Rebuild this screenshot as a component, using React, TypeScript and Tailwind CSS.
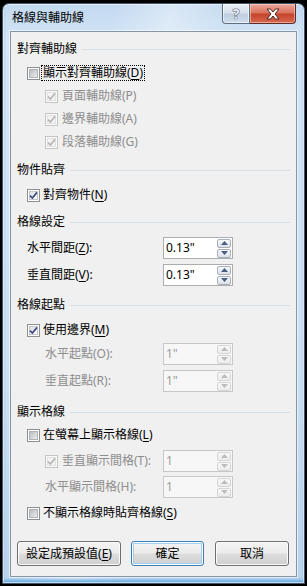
import React from 'react';

// Win7-style "格線與輔助線" dialog

const Check = ({ checked = false, disabled = false }: { checked?: boolean; disabled?: boolean }) => (
  <span
    className={`relative flex h-[13px] w-[13px] shrink-0 items-center justify-center border ${
      disabled ? 'border-[#c3c5c7] bg-[#fbfbfb]' : 'border-[#8e8f8f] bg-white'
    }`}
  >
    <span
      className={`h-[9px] w-[9px] border ${
        disabled
          ? 'border-[#e0e1e2] bg-[#f4f4f4]'
          : checked
          ? 'border-[#c4c6c9] bg-[linear-gradient(135deg,#dcdee1,#fbfbfb)]'
          : 'border-[#aeb2b6] bg-[linear-gradient(135deg,#b9bdc2,#ececec)]'
      }`}
    />
    {checked && (
      <svg className="absolute left-0 top-0" width="11" height="11" viewBox="0 0 11 11">
        <path
          d="M2 5.6 L4.4 8 L9 2.4"
          fill="none"
          stroke={disabled ? '#b6b6b6' : '#3f4d86'}
          strokeWidth="1.7"
        />
      </svg>
    )}
  </span>
);

const SpinBtn = ({ up = false, disabled = false }: { up?: boolean; disabled?: boolean }) => (
  <span
    className={`flex h-[9px] w-[14px] items-center justify-center rounded-[2px] border ${
      disabled
        ? 'border-[#d3d5d7] bg-[linear-gradient(180deg,#f8f8f8,#ececec)]'
        : 'border-[#a9afb8] bg-[linear-gradient(180deg,#f7f8fa,#dde1e7)]'
    }`}
  >
    <svg width="7" height="4" viewBox="0 0 7 4">
      <path d={up ? 'M0 4 L3.5 0 L7 4 Z' : 'M0 0 L3.5 4 L7 0 Z'} fill={disabled ? '#bcbcbc' : '#4b5c84'} />
    </svg>
  </span>
);

const Spinner = ({ value, disabled = false }: { value: string; disabled?: boolean }) => (
  <div
    className={`flex h-[22px] w-[70px] shrink-0 items-center border ${
      disabled ? 'border-[#c5c7ca] bg-[#f7f7f7] text-[#9b9b9b]' : 'border-[#abadb3] bg-white text-black'
    }`}
  >
    <span className="flex-1 pl-[2px] text-[12px] leading-none">{value}</span>
    <div className="mr-[1px] flex flex-col gap-[1px]">
      <SpinBtn up disabled={disabled} />
      <SpinBtn disabled={disabled} />
    </div>
  </div>
);

const Header = ({ text, className = '' }: { text: string; className?: string }) => (
  <div className={`flex h-[16px] items-center pl-[6px] pr-[6px] ${className}`}>
    <span>{text}</span>
    <div className="ml-[5px] h-px flex-1 bg-[#d5dfe5]" />
  </div>
);

const Btn = ({ children, main = false, className = '' }: { children: React.ReactNode; main?: boolean; className?: string }) => (
  <div
    className={`flex h-[25px] items-center justify-center rounded-[3px] border bg-[linear-gradient(180deg,#f4f4f4_0%,#ebebeb_48%,#dddddd_52%,#cfcfcf_100%)] ${
      main
        ? 'border-[#3c7fb1] shadow-[inset_0_0_0_1px_#ffffff,inset_0_0_0_2px_#9fd0f1]'
        : 'border-[#707070] shadow-[inset_0_0_0_1px_#fbfbfb]'
    } ${className}`}
  >
    {children}
  </div>
);

const grey = 'text-[#8d8d8d]';

export default function App() {
  return (
    <div className="h-[586px] w-[307px] bg-black pl-[2px] pt-[3px] font-['Noto_Sans','Noto_Sans_CJK_TC',sans-serif] text-[12px] leading-none text-black">
      <div className="flex h-[581px] w-[303px] flex-col rounded-t-[7px] border border-[#46566a] bg-[linear-gradient(100deg,transparent_28%,rgba(255,255,255,0.35)_42%,transparent_58%),linear-gradient(180deg,#c3d9f0_0%,#d2e4f6_6%,#cde0f3_60%,#b9d3ec_100%)] shadow-[inset_0_0_0_1px_rgba(255,255,255,0.55),inset_0_-3px_3px_#69ade2]">
        {/* title bar */}
        <div className="flex h-[27px] shrink-0 items-start">
          <span className="mt-[8px] pl-[9px]">格線與輔助線</span>
          <div className="ml-auto mr-[8px] flex">
            <div className="flex h-[20px] w-[28px] items-center justify-center rounded-bl-[4px] border border-t-0 border-[#5f6f82] bg-[linear-gradient(180deg,#eef3f9_0%,#d5e0ec_45%,#c0cfe0_55%,#cfdcea_100%)] shadow-[inset_0_0_0_1px_rgba(255,255,255,0.6)]">
              <span className="text-[14px] font-bold text-[#e4e8ee] [-webkit-text-stroke:1px_#555f6c] [paint-order:stroke_fill]">?</span>
            </div>
            <div className="flex h-[20px] w-[46px] items-center justify-center rounded-br-[4px] border border-l-0 border-t-0 border-[#5e2b24] bg-[linear-gradient(180deg,#eba99d_0%,#d9735f_45%,#c4452c_55%,#d7694f_100%)] shadow-[inset_0_0_0_1px_rgba(255,220,210,0.55)]">
              <svg width="14" height="12" viewBox="0 0 14 12">
                <path
                  d="M1 1 L4.5 1 L7 4 L9.5 1 L13 1 L9 6 L13 11 L9.5 11 L7 8 L4.5 11 L1 11 L5 6 Z"
                  fill="#ffffff"
                  stroke="#4a2a26"
                  strokeWidth="1"
                  strokeLinejoin="round"
                />
              </svg>
            </div>
          </div>
        </div>

        {/* client area */}
        <div className="mx-[7px] flex h-[546px] w-[287px] shrink-0 flex-col border border-[#8495a8] bg-[#f0f0f0] shadow-[0_0_0_1px_rgba(255,255,255,0.6)]">
          <Header text="對齊輔助線" className="mt-[9px]" />
          <div className="mt-[7px] flex h-[18px] items-center pl-[16px]">
            <Check />
            <span className="ml-[1px] border border-dotted border-black px-[1px] py-[1px]">
              顯示對齊輔助線(<span className="underline underline-offset-2">D</span>)
            </span>
          </div>
          <div className={`mt-[5px] flex h-[18px] items-center pl-[34px] ${grey}`}>
            <Check checked disabled />
            <span className="ml-[4px]">頁面輔助線(P)</span>
          </div>
          <div className={`mt-[5px] flex h-[18px] items-center pl-[34px] ${grey}`}>
            <Check checked disabled />
            <span className="ml-[4px]">邊界輔助線(A)</span>
          </div>
          <div className={`mt-[5px] flex h-[18px] items-center pl-[34px] ${grey}`}>
            <Check checked disabled />
            <span className="ml-[4px]">段落輔助線(G)</span>
          </div>

          <Header text="物件貼齊" className="mt-[11px]" />
          <div className="mt-[8px] flex h-[18px] items-center pl-[16px]">
            <Check checked />
            <span className="ml-[3px]">
              對齊物件(<span className="underline underline-offset-2">N</span>)
            </span>
          </div>

          <Header text="格線設定" className="mt-[10px]" />
          <div className="mt-[7px] flex h-[22px] items-center pl-[16px]">
            <span className="w-[136px]">
              水平間距(<span className="underline underline-offset-2">Z</span>):
            </span>
            <Spinner value={'0.13"'} />
          </div>
          <div className="mt-[5px] flex h-[22px] items-center pl-[16px]">
            <span className="w-[136px]">
              垂直間距(<span className="underline underline-offset-2">V</span>):
            </span>
            <Spinner value={'0.13"'} />
          </div>

          <Header text="格線起點" className="mt-[11px]" />
          <div className="mt-[8px] flex h-[18px] items-center pl-[16px]">
            <Check checked />
            <span className="ml-[3px]">
              使用邊界(<span className="underline underline-offset-2">M</span>)
            </span>
          </div>
          <div className="mt-[4px] flex h-[22px] items-center pl-[34px]">
            <span className={`w-[118px] ${grey}`}>水平起點(O):</span>
            <Spinner value={'1"'} disabled />
          </div>
          <div className="mt-[5px] flex h-[22px] items-center pl-[34px]">
            <span className={`w-[118px] ${grey}`}>垂直起點(R):</span>
            <Spinner value={'1"'} disabled />
          </div>

          <Header text="顯示格線" className="mt-[12px]" />
          <div className="mt-[6px] flex h-[18px] items-center pl-[16px]">
            <Check />
            <span className="ml-[3px]">
              在螢幕上顯示格線(<span className="underline underline-offset-2">L</span>)
            </span>
          </div>
          <div className="mt-[6px] flex h-[22px] items-center pl-[34px]">
            <div className={`flex w-[118px] items-center ${grey}`}>
              <Check checked disabled />
              <span className="ml-[4px]">垂直顯示間格(T):</span>
            </div>
            <Spinner value="1" disabled />
          </div>
          <div className="mt-[4px] flex h-[22px] items-center pl-[34px]">
            <span className={`w-[118px] ${grey}`}>水平顯示間格(H):</span>
            <Spinner value="1" disabled />
          </div>
          <div className="mt-[6px] flex h-[18px] items-center pl-[16px]">
            <Check />
            <span className="ml-[3px]">
              不顯示格線時貼齊格線(<span className="underline underline-offset-2">S</span>)
            </span>
          </div>

          <div className="mt-[19px] flex pl-[6px]">
            <Btn className="w-[104px]">
              設定成預設值(<span className="underline underline-offset-2">E</span>)
            </Btn>
            <Btn main className="ml-[10px] w-[73px]">
              確定
            </Btn>
            <Btn className="ml-[11px] w-[74px]">取消</Btn>
          </div>
        </div>
      </div>
    </div>
  );
}
